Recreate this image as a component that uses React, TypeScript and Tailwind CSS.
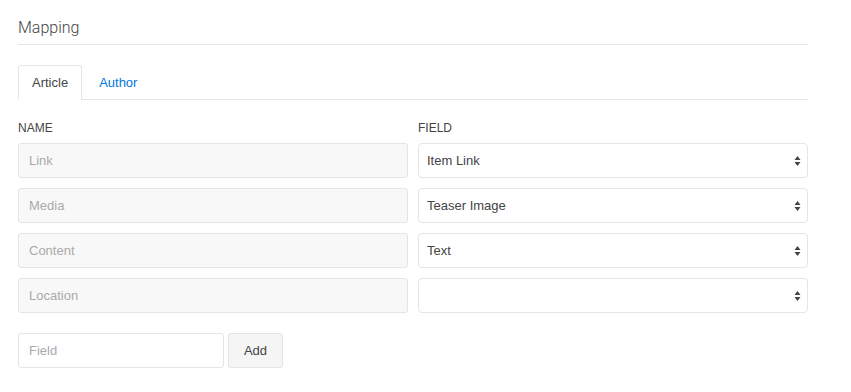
import React from 'react';

const rows = [
    { name: 'Link', field: 'Item Link' },
    { name: 'Media', field: 'Teaser Image' },
    { name: 'Content', field: 'Text' },
    { name: 'Location', field: '' },
];

const Arrows: React.FC = () => (
    <svg className="pointer-events-none absolute right-[7px] top-1/2 -translate-y-1/2" width="7" height="11" viewBox="0 0 7 11">
        <path d="M3.5 0.5 L6.5 4.5 L0.5 4.5 Z" fill="#444" />
        <path d="M3.5 10.5 L6.5 6.5 L0.5 6.5 Z" fill="#444" />
    </svg>
);

const App: React.FC = () => {
    return (
        <div className="min-h-screen bg-white font-['Liberation_Sans',Arial,sans-serif] text-[13px] text-[#444]">
            <div className="ml-[18px] w-[790px] pt-[17px]">
                <h2 className="border-b border-[#e5e5e5] pb-[5px] font-['Roboto',sans-serif] text-[16px] leading-[22px] font-light text-[#444]">Mapping</h2>

                {/* Tabs */}
                <ul className="mt-[20px] flex border-b border-[#e5e5e5]">
                    <li className="-mb-px flex h-[35px] items-center rounded-t-[3px] border border-[#e5e5e5] border-b-white bg-white px-[13px] text-[#444]">
                        Article
                    </li>
                    <li className="-mb-px ml-[3px] flex h-[35px] items-center px-[14px] text-[#0077dd]">Author</li>
                </ul>

                {/* Mapping table */}
                <div className="mt-[19px] grid grid-cols-2 gap-x-[10px]">
                    <div className="text-[12px] leading-[18px] uppercase">Name</div>
                    <div className="text-[12px] leading-[18px] uppercase">Field</div>
                </div>
                <div className="mt-[6px] grid grid-cols-2 gap-x-[10px] gap-y-[10px]">
                    {rows.map((r) => (
                        <React.Fragment key={r.name}>
                            <input
                                disabled
                                placeholder={r.name}
                                className="h-[35px] rounded-[3px] border border-[#e5e5e5] bg-[#f8f8f8] px-[10px] text-[13px] placeholder:text-[#aaa]"
                            />
                            <div className="relative">
                                <select
                                    defaultValue={r.field}
                                    className="h-[35px] w-full appearance-none rounded-[4px] border border-[#e5e5e5] bg-white px-[8px] text-[13px] text-[#444]"
                                >
                                    <option value={r.field}>{r.field}</option>
                                </select>
                                <Arrows />
                            </div>
                        </React.Fragment>
                    ))}
                </div>

                {/* Add field */}
                <div className="mt-[20px] flex gap-[4px]">
                    <input
                        placeholder="Field"
                        className="h-[35px] w-[206px] rounded-[3px] border border-[#e5e5e5] bg-white px-[10px] text-[13px] placeholder:text-[#aaa]"
                    />
                    <button className="h-[35px] w-[55px] rounded-[3px] border border-[#e5e5e5] bg-[#f5f5f5] text-[13px] text-[#444]">Add</button>
                </div>
            </div>
        </div>
    );
};

export default App;
